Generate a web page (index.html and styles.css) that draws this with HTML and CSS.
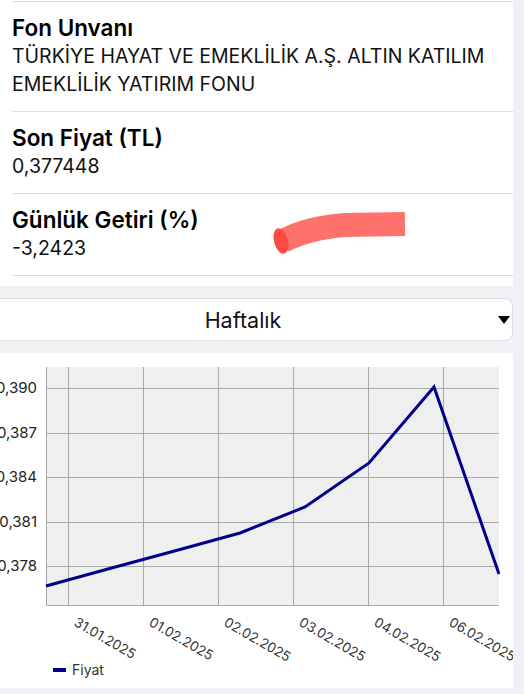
FILE: index.html
```html
<!DOCTYPE html>
<html lang="tr">
<head>
    <meta charset="UTF-8">
    <title>Fon Detayı</title>
    <link rel="stylesheet" href="styles.css">
</head>
<body>
    <div class="page">
        <div class="info-card">
            <div class="row">
                <div class="label">Fon Unvanı</div>
                <div class="value">TÜRKİYE HAYAT VE EMEKLİLİK A.Ş. ALTIN KATILIM EMEKLİLİK YATIRIM FONU</div>
            </div>
            <div class="row">
                <div class="label">Son Fiyat (TL)</div>
                <div class="value">0,377448</div>
            </div>
            <div class="row">
                <div class="label">Günlük Getiri (%)</div>
                <div class="value">-3,2423</div>
            </div>

            <!-- kırmızı işaretleme -->
            <svg class="scribble" width="160" height="60" viewBox="260 205 160 60">
                <path d="M283 240 C 298 232, 318 226, 345 224 L 405 223" fill="none" stroke="#ff6a63" stroke-width="24" stroke-linecap="butt" opacity="0.95"/>
                <ellipse cx="281" cy="240" rx="7" ry="13" fill="#ff4a42" transform="rotate(-15 281 240)"/>
            </svg>
        </div>

        <div class="select-box">
            <span class="select-text">Haftalık</span>
            <span class="select-arrow"></span>
        </div>

        <div class="chart-card">
            <svg class="chart" width="513" height="335" viewBox="0 0 513 335">
                <rect x="46" y="14" width="453" height="239" fill="#efefef"/>
                <g stroke="#a9a9a9" stroke-width="1">
                    <line x1="46" y1="35.5" x2="499" y2="35.5"/>
                    <line x1="46" y1="80.5" x2="499" y2="80.5"/>
                    <line x1="46" y1="124.5" x2="499" y2="124.5"/>
                    <line x1="46" y1="169.5" x2="499" y2="169.5"/>
                    <line x1="46" y1="213.5" x2="499" y2="213.5"/>
                    <line x1="68.5" y1="14" x2="68.5" y2="253"/>
                    <line x1="143.5" y1="14" x2="143.5" y2="253"/>
                    <line x1="218.5" y1="14" x2="218.5" y2="253"/>
                    <line x1="293.5" y1="14" x2="293.5" y2="253"/>
                    <line x1="368.5" y1="14" x2="368.5" y2="253"/>
                    <line x1="443.5" y1="14" x2="443.5" y2="253"/>
                    <line x1="46.5" y1="14" x2="46.5" y2="253"/>
                    <line x1="46" y1="252.5" x2="499" y2="252.5"/>
                </g>
                <polyline points="46,233 110.7,215.3 175.4,197.7 240,180 305,154 369,110 434,34 499,221"
                          fill="none" stroke="#00008b" stroke-width="3" stroke-linejoin="miter"/>

                <g class="y-labels" text-anchor="end">
                    <text x="37" y="40">0,390</text>
                    <text x="37" y="85">0,387</text>
                    <text x="37" y="129">0,384</text>
                    <text x="37" y="174">0,381</text>
                    <text x="37" y="218">0,378</text>
                </g>

                <g class="x-labels">
                    <text transform="translate(73 272) rotate(30)">31.01.2025</text>
                    <text transform="translate(148 272) rotate(30)">01.02.2025</text>
                    <text transform="translate(223 272) rotate(30)">02.02.2025</text>
                    <text transform="translate(298 272) rotate(30)">03.02.2025</text>
                    <text transform="translate(373 272) rotate(30)">04.02.2025</text>
                    <text transform="translate(448 272) rotate(30)">06.02.2025</text>
                </g>

                <rect x="53" y="315" width="13" height="4" fill="#00008b"/>
                <text class="legend" x="72" y="322">Fiyat</text>
            </svg>
        </div>
    </div>
</body>
</html>
```

FILE: styles.css
```css
body {
    margin: 0;
    padding: 0;
    background-color: #f0f0f5;
    font-family: Inter, "Noto Sans", Arial, sans-serif;
    color: #000;
}

.page {
    width: 513px;
}

.info-card {
    position: relative;
    background-color: #fff;
    padding-bottom: 10px;
    border-top: 1px solid #fff;
}

.row {
    margin-left: 12px;
    padding: 12px 0 13px 0;
    border-top: 1px solid #dcdcdc;
}

.row:last-of-type {
    border-bottom: 1px solid #dcdcdc;
}

.label {
    font-size: 22.5px;
    font-weight: 600;
    line-height: 28px;
}

.value {
    font-size: 19.5px;
    line-height: 28px;
    padding-right: 12px;
    color: #111;
}

.scribble {
    position: absolute;
    left: 260px;
    top: 205px;
}

.select-box {
    margin: 12px 0 12px -27px;
    height: 41px;
    background-color: #fff;
    border: 1px solid #dedede;
    border-radius: 8px;
    display: flex;
    align-items: center;
    justify-content: center;
    position: relative;
}

.select-text {
    font-size: 21.5px;
    color: #111;
}

.select-arrow {
    position: absolute;
    right: 2px;
    top: 17px;
    width: 0;
    height: 0;
    border-left: 6px solid transparent;
    border-right: 6px solid transparent;
    border-top: 8px solid #000;
}

.chart-card {
    background-color: #fff;
    height: 335px;
}

.chart {
    display: block;
}

.y-labels text {
    font-size: 15px;
    fill: #222;
}

.x-labels text {
    font-size: 13.5px;
    fill: #333;
}

.legend {
    font-size: 14px;
    fill: #333;
}
```
